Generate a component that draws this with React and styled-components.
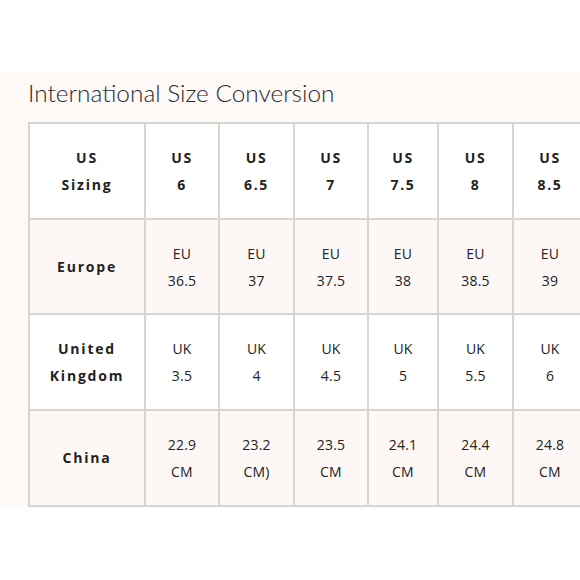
import React from 'react';
import styled, { createGlobalStyle } from 'styled-components';

const columns = [
  { us: '6', eu: '36.5', uk: '3.5', cn: '22.9', cnUnit: 'CM', width: 74 },
  { us: '6.5', eu: '37', uk: '4', cn: '23.2', cnUnit: 'CM)', width: 75 },
  { us: '7', eu: '37.5', uk: '4.5', cn: '23.5', cnUnit: 'CM', width: 74 },
  { us: '7.5', eu: '38', uk: '5', cn: '24.1', cnUnit: 'CM', width: 70 },
  { us: '8', eu: '38.5', uk: '5.5', cn: '24.4', cnUnit: 'CM', width: 75 },
  { us: '8.5', eu: '39', uk: '6', cn: '24.8', cnUnit: 'CM', width: 74 },
];

const GlobalStyle = createGlobalStyle`
  html, body {
    margin: 0;
    padding: 0;
    background: #ffffff;
    overflow: hidden;
  }
`;

const Page = styled.div`
  width: 580px;
  height: 580px;
  padding-top: 72px;
  box-sizing: border-box;
  overflow: hidden;
`;

const Panel = styled.section`
  background: #fdf9f7;
  padding: 7px 0 0 28px;
  height: 436px;
  box-sizing: border-box;
  overflow: hidden;
`;

const Title = styled.h2`
  margin: 0 0 16px;
  font-family: Lato, 'Open Sans', sans-serif;
  font-weight: 300;
  font-size: 24.4px;
  line-height: 27px;
  color: #2a2a2a;
  white-space: nowrap;
`;

const Table = styled.table`
  width: 558px;
  border-collapse: collapse;
  table-layout: fixed;
  font-family: 'Open Sans', 'Noto Sans', sans-serif;
  color: #222;
`;

const Row = styled.tr`
  height: 95.7px;
  background: ${({ $tinted }) => ($tinted ? '#fdf8f5' : '#ffffff')};
`;

const Cell = styled.td`
  border: 2px solid #d8d5d1;
  padding: 0;
  text-align: center;
  vertical-align: middle;
  font-size: 14px;
  line-height: 27px;
  font-weight: ${({ $bold }) => ($bold ? 700 : 400)};
  letter-spacing: ${({ $bold }) => ($bold ? '1.6px' : '0.2px')};
`;

const Label = styled(Cell)`
  font-weight: 700;
  letter-spacing: 1.8px;
`;

const Lines = ({ top, bottom }) => (
  <>
    {top}
    <br />
    {bottom}
  </>
);

export default function App() {
  return (
    <Page>
      <GlobalStyle />
      <Panel>
        <Title>International Size Conversion</Title>
        <Table>
          <colgroup>
            <col style={{ width: 116 }} />
            {columns.map((c) => (
              <col key={c.us} style={{ width: c.width }} />
            ))}
          </colgroup>
          <tbody>
            <Row>
              <Label>
                <Lines top="US" bottom="Sizing" />
              </Label>
              {columns.map((c) => (
                <Cell key={c.us} $bold>
                  <Lines top="US" bottom={c.us} />
                </Cell>
              ))}
            </Row>
            <Row $tinted>
              <Label>Europe</Label>
              {columns.map((c) => (
                <Cell key={c.us}>
                  <Lines top="EU" bottom={c.eu} />
                </Cell>
              ))}
            </Row>
            <Row>
              <Label>
                <Lines top="United" bottom="Kingdom" />
              </Label>
              {columns.map((c) => (
                <Cell key={c.us}>
                  <Lines top="UK" bottom={c.uk} />
                </Cell>
              ))}
            </Row>
            <Row $tinted>
              <Label>China</Label>
              {columns.map((c) => (
                <Cell key={c.us}>
                  <Lines top={c.cn} bottom={c.cnUnit} />
                </Cell>
              ))}
            </Row>
          </tbody>
        </Table>
      </Panel>
    </Page>
  );
}
